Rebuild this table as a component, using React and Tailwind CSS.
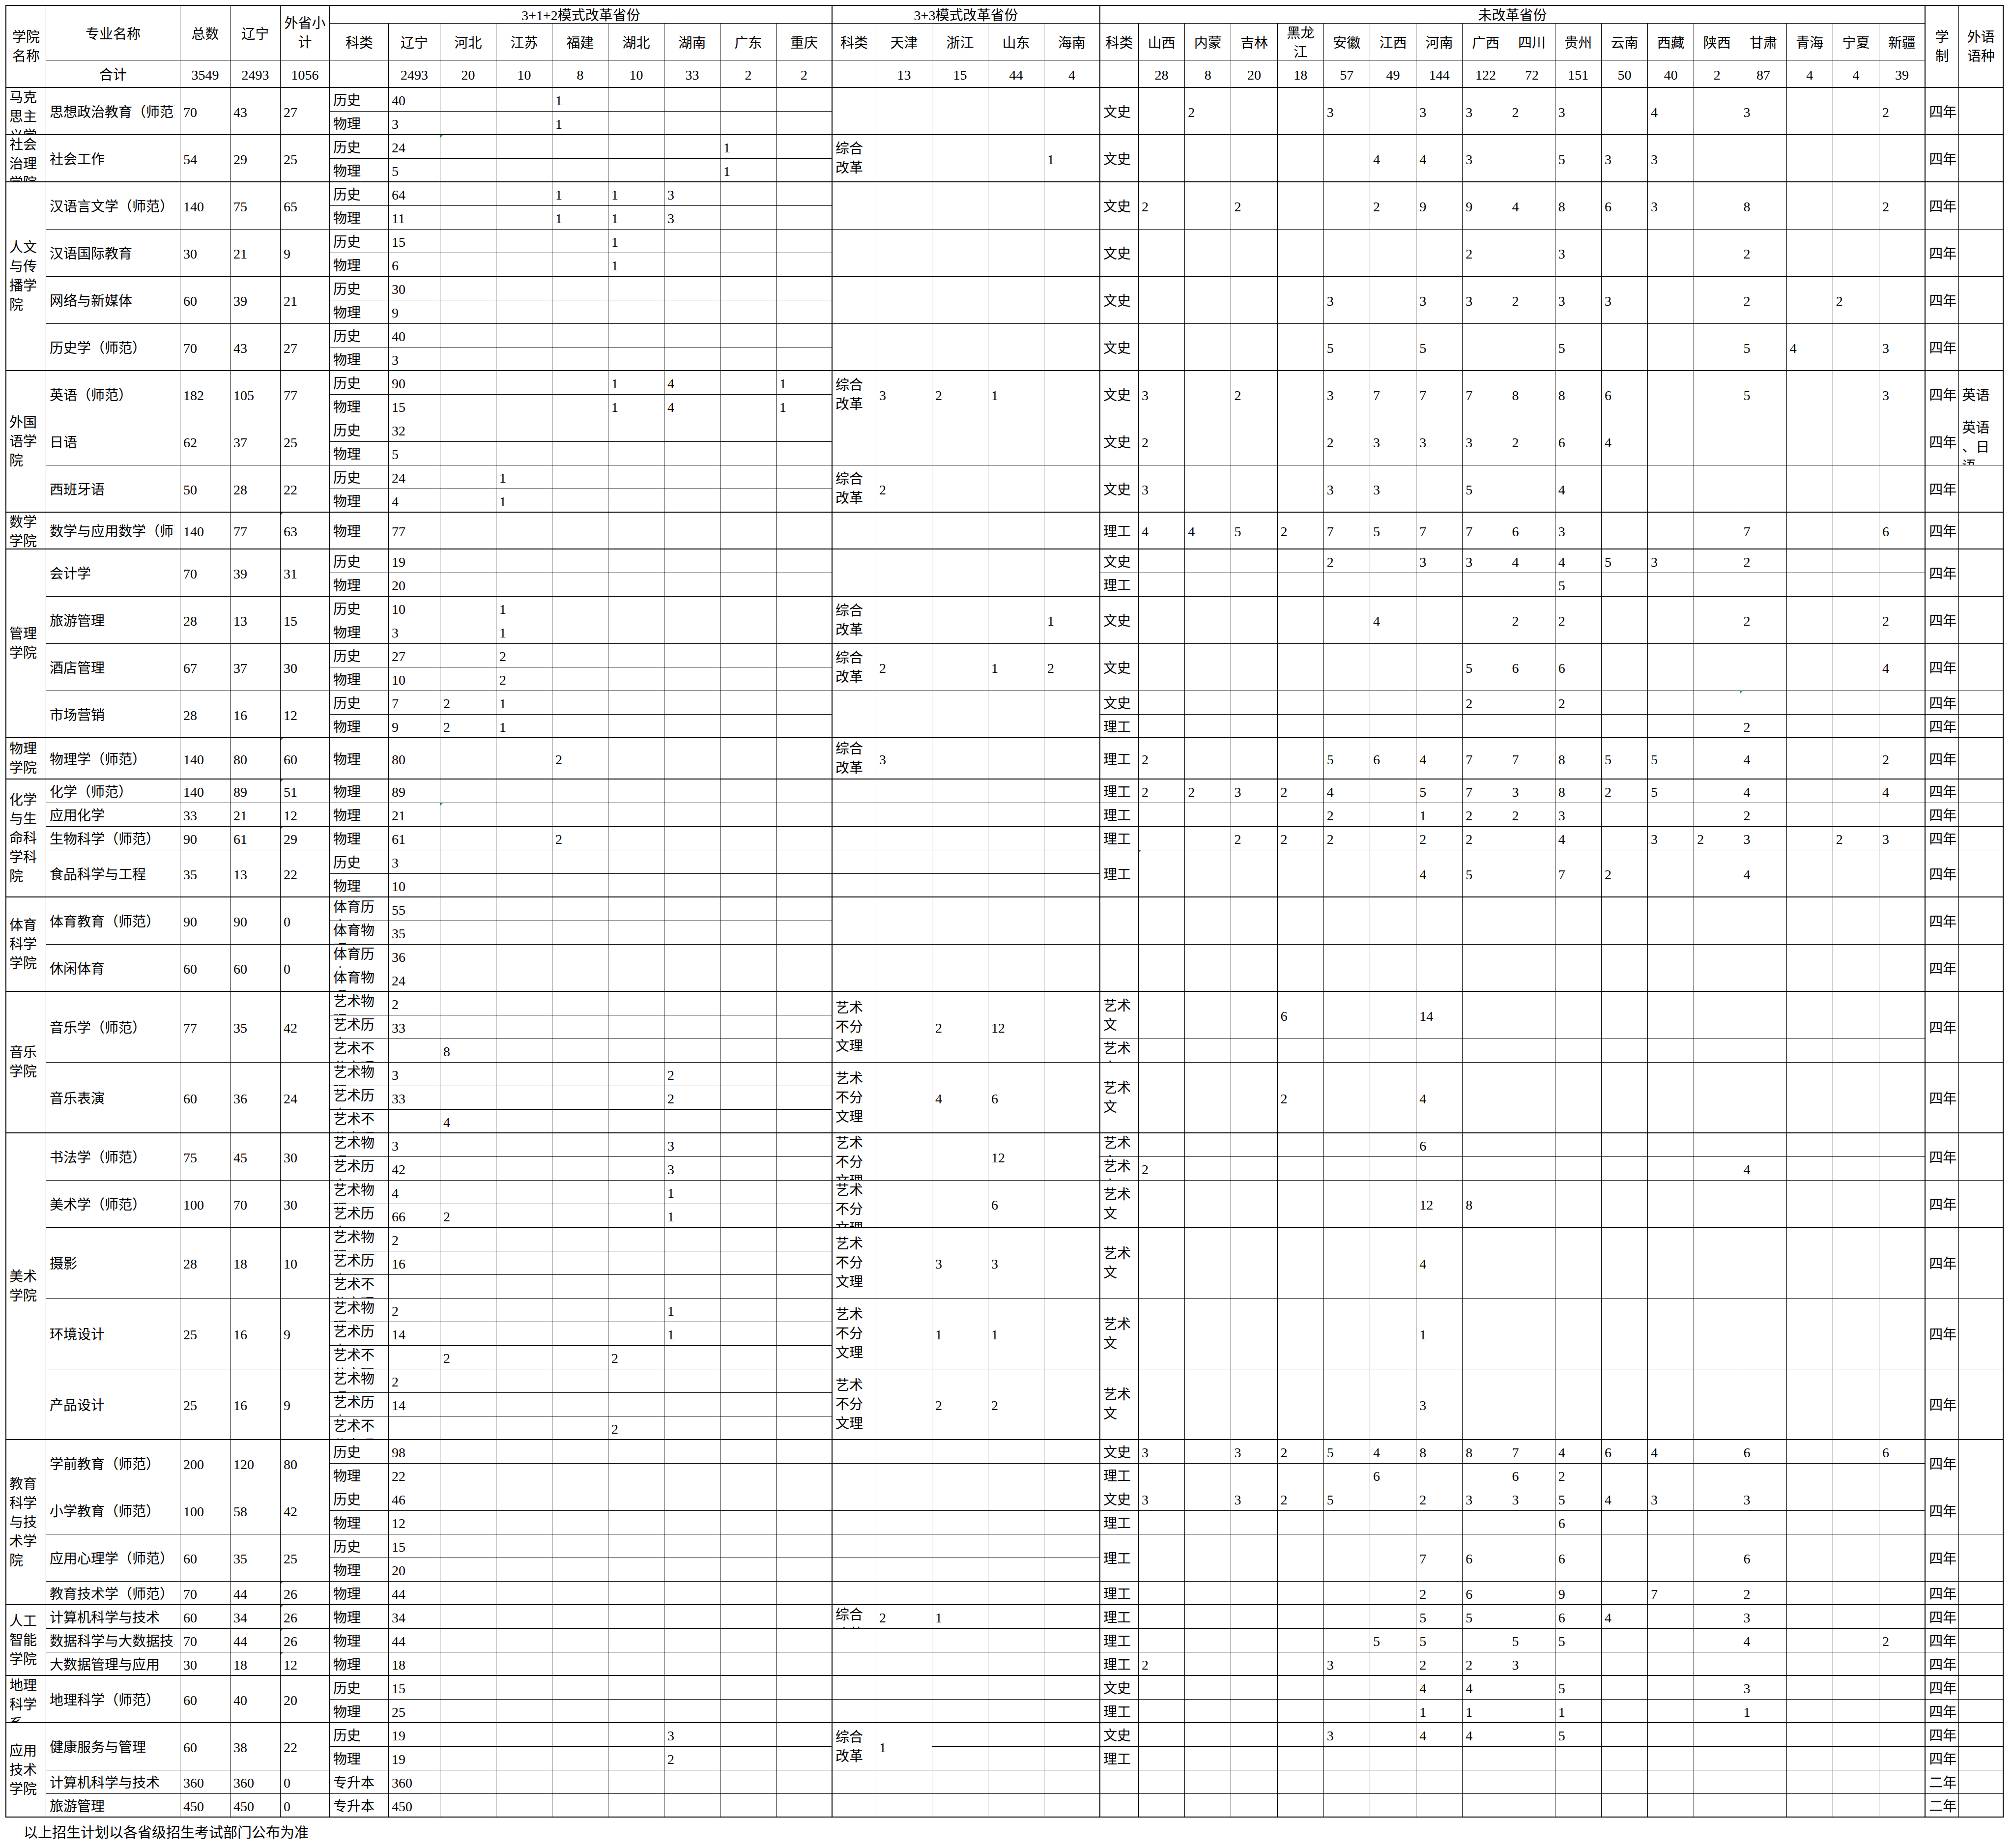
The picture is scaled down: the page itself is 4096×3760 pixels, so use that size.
import React from 'react';

const A_PROV = ['辽宁', '河北', '江苏', '福建', '湖北', '湖南', '广东', '重庆'];
const B_PROV = ['天津', '浙江', '山东', '海南'];
const C_PROV = ['山西', '内蒙', '吉林', '黑龙江', '安徽', '江西', '河南', '广西', '四川', '贵州', '云南', '西藏', '陕西', '甘肃', '青海', '宁夏', '新疆'];

const ZH = '综合\n改革';
const YS = '艺术\n不分\n文理';
const YW = '艺术\n文';
const TH = '体育历\n史';
const TP = '体育物\n理';
const AP = '艺术物\n理';
const AH = '艺术历\n史';
const AN = '艺术不\n分文理';

const COLLEGES = [
  { name: '马克\n思主\n义学\n院', majors: [
    { n: '思想政治教育（师范）', t: 70, l: 43, o: 27,
      a: [['历史', 40, { 福建: 1 }], ['物理', 3, { 福建: 1 }]],
      c: { k: '文史', v: { 内蒙: 2, 安徽: 3, 河南: 3, 广西: 3, 四川: 2, 贵州: 3, 西藏: 4, 甘肃: 3, 新疆: 2 } } },
  ] },
  { name: '社会\n治理\n学院', majors: [
    { n: '社会工作', t: 54, l: 29, o: 25,
      a: [['历史', 24, { 广东: 1 }], ['物理', 5, { 广东: 1 }]],
      b: { k: ZH, v: { 海南: 1 } },
      c: { k: '文史', v: { 江西: 4, 河南: 4, 广西: 3, 贵州: 5, 云南: 3, 西藏: 3 } } },
  ] },
  { name: '人文\n与传\n播学\n院', majors: [
    { n: '汉语言文学（师范）', t: 140, l: 75, o: 65,
      a: [['历史', 64, { 福建: 1, 湖北: 1, 湖南: 3 }], ['物理', 11, { 福建: 1, 湖北: 1, 湖南: 3 }]],
      c: { k: '文史', v: { 山西: 2, 吉林: 2, 江西: 2, 河南: 9, 广西: 9, 四川: 4, 贵州: 8, 云南: 6, 西藏: 3, 甘肃: 8, 新疆: 2 } } },
    { n: '汉语国际教育', t: 30, l: 21, o: 9,
      a: [['历史', 15, { 湖北: 1 }], ['物理', 6, { 湖北: 1 }]],
      c: { k: '文史', v: { 广西: 2, 贵州: 3, 甘肃: 2 } } },
    { n: '网络与新媒体', t: 60, l: 39, o: 21,
      a: [['历史', 30], ['物理', 9]],
      c: { k: '文史', v: { 安徽: 3, 河南: 3, 广西: 3, 四川: 2, 贵州: 3, 云南: 3, 甘肃: 2, 宁夏: 2 } } },
    { n: '历史学（师范）', t: 70, l: 43, o: 27,
      a: [['历史', 40], ['物理', 3]],
      c: { k: '文史', v: { 安徽: 5, 河南: 5, 贵州: 5, 甘肃: 5, 青海: 4, 新疆: 3 } } },
  ] },
  { name: '外国\n语学\n院', majors: [
    { n: '英语（师范）', t: 182, l: 105, o: 77,
      a: [['历史', 90, { 湖北: 1, 湖南: 4, 重庆: 1 }], ['物理', 15, { 湖北: 1, 湖南: 4, 重庆: 1 }]],
      b: { k: ZH, v: { 天津: 3, 浙江: 2, 山东: 1 } },
      c: { k: '文史', v: { 山西: 3, 吉林: 2, 安徽: 3, 江西: 7, 河南: 7, 广西: 7, 四川: 8, 贵州: 8, 云南: 6, 甘肃: 5, 新疆: 3 } },
      w: '英语' },
    { n: '日语', t: 62, l: 37, o: 25,
      a: [['历史', 32], ['物理', 5]],
      c: { k: '文史', v: { 山西: 2, 安徽: 2, 江西: 3, 河南: 3, 广西: 3, 四川: 2, 贵州: 6, 云南: 4 } },
      w: '英语\n、日\n语' },
    { n: '西班牙语', t: 50, l: 28, o: 22,
      a: [['历史', 24, { 江苏: 1 }], ['物理', 4, { 江苏: 1 }]],
      b: { k: ZH, v: { 天津: 2 } },
      c: { k: '文史', v: { 山西: 3, 安徽: 3, 江西: 3, 广西: 5, 贵州: 4 } } },
  ] },
  { name: '数学\n学院', majors: [
    { n: '数学与应用数学（师范）', t: 140, l: 77, o: 63,
      a: [['物理', 77]],
      c: { k: '理工', v: { 山西: 4, 内蒙: 4, 吉林: 5, 黑龙江: 2, 安徽: 7, 江西: 5, 河南: 7, 广西: 7, 四川: 6, 贵州: 3, 甘肃: 7, 新疆: 6 } } },
  ] },
  { name: '管理\n学院', majors: [
    { n: '会计学', t: 70, l: 39, o: 31,
      a: [['历史', 19], ['物理', 20]],
      c: [{ k: '文史', v: { 安徽: 2, 河南: 3, 广西: 3, 四川: 4, 贵州: 4, 云南: 5, 西藏: 3, 甘肃: 2 } }, { k: '理工', v: { 贵州: 5 } }] },
    { n: '旅游管理', t: 28, l: 13, o: 15,
      a: [['历史', 10, { 江苏: 1 }], ['物理', 3, { 江苏: 1 }]],
      b: { k: ZH, v: { 海南: 1 } },
      c: { k: '文史', v: { 江西: 4, 四川: 2, 贵州: 2, 甘肃: 2, 新疆: 2 } } },
    { n: '酒店管理', t: 67, l: 37, o: 30,
      a: [['历史', 27, { 江苏: 2 }], ['物理', 10, { 江苏: 2 }]],
      b: { k: ZH, v: { 天津: 2, 山东: 1, 海南: 2 } },
      c: { k: '文史', v: { 广西: 5, 四川: 6, 贵州: 6, 新疆: 4 } } },
    { n: '市场营销', t: 28, l: 16, o: 12,
      a: [['历史', 7, { 河北: 2, 江苏: 1 }], ['物理', 9, { 河北: 2, 江苏: 1 }]],
      c: [{ k: '文史', v: { 广西: 2, 贵州: 2 } }, { k: '理工', v: { 甘肃: 2 } }],
      x: [{}, {}] },
  ] },
  { name: '物理\n学院', majors: [
    { n: '物理学（师范）', t: 140, l: 80, o: 60,
      a: [['物理', 80, { 福建: 2 }]],
      b: { k: ZH, v: { 天津: 3 } },
      c: { k: '理工', v: { 山西: 2, 安徽: 5, 江西: 6, 河南: 4, 广西: 7, 四川: 7, 贵州: 8, 云南: 5, 西藏: 5, 甘肃: 4, 新疆: 2 } } },
  ] },
  { name: '化学\n与生\n命科\n学科\n院', majors: [
    { n: '化学（师范）', t: 140, l: 89, o: 51,
      a: [['物理', 89]],
      c: { k: '理工', v: { 山西: 2, 内蒙: 2, 吉林: 3, 黑龙江: 2, 安徽: 4, 河南: 5, 广西: 7, 四川: 3, 贵州: 8, 云南: 2, 西藏: 5, 甘肃: 4, 新疆: 4 } } },
    { n: '应用化学', t: 33, l: 21, o: 12,
      a: [['物理', 21]],
      c: { k: '理工', v: { 安徽: 2, 河南: 1, 广西: 2, 四川: 2, 贵州: 3, 甘肃: 2 } } },
    { n: '生物科学（师范）', t: 90, l: 61, o: 29,
      a: [['物理', 61, { 福建: 2 }]],
      c: { k: '理工', v: { 吉林: 2, 黑龙江: 2, 安徽: 2, 河南: 2, 广西: 2, 贵州: 4, 西藏: 3, 陕西: 2, 甘肃: 3, 宁夏: 2, 新疆: 3 } } },
    { n: '食品科学与工程', t: 35, l: 13, o: 22,
      a: [['历史', 3], ['物理', 10]],
      b: [{}, {}],
      c: { k: '理工', v: { 河南: 4, 广西: 5, 贵州: 7, 云南: 2, 甘肃: 4 } } },
  ] },
  { name: '体育\n科学\n学院', majors: [
    { n: '体育教育（师范）', t: 90, l: 90, o: 0, a: [[TH, 55], [TP, 35]] },
    { n: '休闲体育', t: 60, l: 60, o: 0, a: [[TH, 36], [TP, 24]] },
  ] },
  { name: '音乐\n学院', majors: [
    { n: '音乐学（师范）', t: 77, l: 35, o: 42,
      a: [[AP, 2], [AH, 33], [AN, '', { 河北: 8 }]],
      b: { k: YS, v: { 浙江: 2, 山东: 12 } },
      c: [{ k: YW, n: 2, v: { 黑龙江: 6, 河南: 14 } }, { k: YW }] },
    { n: '音乐表演', t: 60, l: 36, o: 24,
      a: [[AP, 3, { 湖南: 2 }], [AH, 33, { 湖南: 2 }], [AN, '', { 河北: 4 }]],
      b: { k: YS, v: { 浙江: 4, 山东: 6 } },
      c: { k: YW, v: { 黑龙江: 2, 河南: 4 } } },
  ] },
  { name: '美术\n学院', majors: [
    { n: '书法学（师范）', t: 75, l: 45, o: 30,
      a: [[AP, 3, { 湖南: 3 }], [AH, 42, { 湖南: 3 }]],
      b: { k: YS, v: { 山东: 12 } },
      c: [{ k: YW, v: { 河南: 6 } }, { k: YW, v: { 山西: 2, 甘肃: 4 } }] },
    { n: '美术学（师范）', t: 100, l: 70, o: 30,
      a: [[AP, 4, { 湖南: 1 }], [AH, 66, { 河北: 2, 湖南: 1 }]],
      b: { k: YS, v: { 山东: 6 } },
      c: { k: YW, v: { 河南: 12, 广西: 8 } } },
    { n: '摄影', t: 28, l: 18, o: 10,
      a: [[AP, 2], [AH, 16], [AN, '']],
      b: { k: YS, v: { 浙江: 3, 山东: 3 } },
      c: { k: YW, v: { 河南: 4 } } },
    { n: '环境设计', t: 25, l: 16, o: 9,
      a: [[AP, 2, { 湖南: 1 }], [AH, 14, { 湖南: 1 }], [AN, '', { 河北: 2, 湖北: 2 }]],
      b: { k: YS, v: { 浙江: 1, 山东: 1 } },
      c: { k: YW, v: { 河南: 1 } } },
    { n: '产品设计', t: 25, l: 16, o: 9,
      a: [[AP, 2], [AH, 14], [AN, '', { 湖北: 2 }]],
      b: { k: YS, v: { 浙江: 2, 山东: 2 } },
      c: { k: YW, v: { 河南: 3 } } },
  ] },
  { name: '教育\n科学\n与技\n术学\n院', majors: [
    { n: '学前教育（师范）', t: 200, l: 120, o: 80,
      a: [['历史', 98], ['物理', 22]],
      b: [{}, {}],
      c: [{ k: '文史', v: { 山西: 3, 吉林: 3, 黑龙江: 2, 安徽: 5, 江西: 4, 河南: 8, 广西: 8, 四川: 7, 贵州: 4, 云南: 6, 西藏: 4, 甘肃: 6, 新疆: 6 } },
        { k: '理工', v: { 江西: 6, 四川: 6, 贵州: 2 } }] },
    { n: '小学教育（师范）', t: 100, l: 58, o: 42,
      a: [['历史', 46], ['物理', 12]],
      b: [{}, {}],
      c: [{ k: '文史', v: { 山西: 3, 吉林: 3, 黑龙江: 2, 安徽: 5, 河南: 2, 广西: 3, 四川: 3, 贵州: 5, 云南: 4, 西藏: 3, 甘肃: 3 } },
        { k: '理工', v: { 贵州: 6 } }] },
    { n: '应用心理学（师范）', t: 60, l: 35, o: 25,
      a: [['历史', 15], ['物理', 20]],
      b: [{}, {}],
      c: { k: '理工', v: { 河南: 7, 广西: 6, 贵州: 6, 甘肃: 6 } } },
    { n: '教育技术学（师范）', t: 70, l: 44, o: 26,
      a: [['物理', 44]],
      c: { k: '理工', v: { 河南: 2, 广西: 6, 贵州: 9, 西藏: 7, 甘肃: 2 } } },
  ] },
  { name: '人工\n智能\n学院', majors: [
    { n: '计算机科学与技术', t: 60, l: 34, o: 26,
      a: [['物理', 34]],
      b: { k: ZH, v: { 天津: 2, 浙江: 1 } },
      c: { k: '理工', v: { 河南: 5, 广西: 5, 贵州: 6, 云南: 4, 甘肃: 3 } } },
    { n: '数据科学与大数据技术', t: 70, l: 44, o: 26,
      a: [['物理', 44]],
      c: { k: '理工', v: { 江西: 5, 河南: 5, 四川: 5, 贵州: 5, 甘肃: 4, 新疆: 2 } } },
    { n: '大数据管理与应用', t: 30, l: 18, o: 12,
      a: [['物理', 18]],
      c: { k: '理工', v: { 山西: 2, 安徽: 3, 河南: 2, 广西: 2, 四川: 3 } } },
  ] },
  { name: '地理\n科学\n系', majors: [
    { n: '地理科学（师范）', t: 60, l: 40, o: 20,
      a: [['历史', 15], ['物理', 25]],
      b: [{}, {}],
      c: [{ k: '文史', v: { 河南: 4, 广西: 4, 贵州: 5, 甘肃: 3 } }, { k: '理工', v: { 河南: 1, 广西: 1, 贵州: 1, 甘肃: 1 } }],
      x: [{}, {}] },
  ] },
  { name: '应用\n技术\n学院', majors: [
    { n: '健康服务与管理', t: 60, l: 38, o: 22,
      a: [['历史', 19, { 湖南: 3 }], ['物理', 19, { 湖南: 2 }]],
      b: { k: ZH, v: { 天津: 1 }, split: ['浙江', '山东', '海南'] },
      c: [{ k: '文史', v: { 安徽: 3, 河南: 4, 广西: 4, 贵州: 5 } }, { k: '理工' }],
      x: [{}, {}] },
    { n: '计算机科学与技术', t: 360, l: 360, o: 0, a: [['专升本', 360]], x: { t: '二年' } },
    { n: '旅游管理', t: 450, l: 450, o: 0, a: [['专升本', 450]], x: { t: '二年' } },
  ] },
];

const TRI = new Set(['3-8', '19-5', '26-34', '28-5', '29-5', '30-8', '31-5', '32-21', '63-5', '64-5', '65-5', '66-5']);
const THICK_R = new Set([5, 14, 19, 37, 39]);

const str = (v) => (v === undefined || v === null ? '' : String(v));

function segs(spec, k) {
  if (!spec) return [{ off: 0, n: k }];
  if (Array.isArray(spec)) {
    let off = 0;
    return spec.map((s) => {
      const n = s.n || 1;
      const o = { ...s, off, n };
      off += n;
      return o;
    });
  }
  return [{ ...spec, off: 0, n: k }];
}

function buildCells() {
  const cells = [];
  const ends = new Set();
  let r = 1;
  COLLEGES.forEach((cg) => {
    const n = cg.majors.reduce((s, m) => s + m.a.length, 0);
    ends.add(r + n - 1);
    r += n;
  });

  const h = (gr, span, col, cs, text) => cells.push({ gr, span, col, cs, text, hdr: true });
  h(1, 3, 1, 1, '学院\n名称');
  h(1, 2, 2, 1, '专业名称');
  h(3, 1, 2, 1, '合计');
  h(1, 2, 3, 1, '总数');
  h(3, 1, 3, 1, '3549');
  h(1, 2, 4, 1, '辽宁');
  h(3, 1, 4, 1, '2493');
  h(1, 2, 5, 1, '外省小\n计');
  h(3, 1, 5, 1, '1056');
  h(1, 1, 6, 9, '3+1+2模式改革省份');
  h(2, 1, 6, 1, '科类');
  A_PROV.forEach((p, i) => h(2, 1, 7 + i, 1, p));
  h(3, 1, 6, 1, '');
  ['2493', '20', '10', '8', '10', '33', '2', '2'].forEach((v, i) => h(3, 1, 7 + i, 1, v));
  h(1, 1, 15, 5, '3+3模式改革省份');
  h(2, 1, 15, 1, '科类');
  B_PROV.forEach((p, i) => h(2, 1, 16 + i, 1, p));
  h(3, 1, 15, 1, '');
  ['13', '15', '44', '4'].forEach((v, i) => h(3, 1, 16 + i, 1, v));
  h(1, 1, 20, 18, '未改革省份');
  h(2, 1, 20, 1, '科类');
  C_PROV.forEach((p, i) => h(2, 1, 21 + i, 1, p === '黑龙江' ? '黑龙\n江' : p));
  h(3, 1, 20, 1, '');
  ['28', '8', '20', '18', '57', '49', '144', '122', '72', '151', '50', '40', '2', '87', '4', '4', '39'].forEach((v, i) =>
    h(3, 1, 21 + i, 1, v)
  );
  h(1, 3, 38, 1, '学\n制');
  h(1, 3, 39, 1, '外语\n语种');

  const add = (row, span, col, text, kind) =>
    cells.push({ gr: row + 3, span, col, cs: 1, text: str(text), kind, tri: TRI.has(`${row}-${col}`), end: ends.has(row + span - 1) });

  r = 1;
  COLLEGES.forEach((cg) => {
    const total = cg.majors.reduce((s, m) => s + m.a.length, 0);
    add(r, total, 1, cg.name, 'college');
    cg.majors.forEach((m) => {
      const k = m.a.length;
      add(r, k, 2, m.n, 'major');
      add(r, k, 3, m.t);
      add(r, k, 4, m.l);
      add(r, k, 5, m.o);
      m.a.forEach((sr, i) => {
        add(r + i, 1, 6, sr[0]);
        add(r + i, 1, 7, sr[1]);
        A_PROV.slice(1).forEach((p, j) => add(r + i, 1, 8 + j, (sr[2] || {})[p]));
      });
      segs(m.b, k).forEach((s) => {
        add(r + s.off, s.n, 15, s.k);
        B_PROV.forEach((p, j) => {
          if (s.split && s.split.includes(p)) {
            for (let q = 0; q < s.n; q++) add(r + s.off + q, 1, 16 + j, '');
          } else {
            add(r + s.off, s.n, 16 + j, (s.v || {})[p]);
          }
        });
      });
      segs(m.c, k).forEach((s) => {
        add(r + s.off, s.n, 20, s.k);
        C_PROV.forEach((p, j) => add(r + s.off, s.n, 21 + j, (s.v || {})[p]));
      });
      segs(m.x, k).forEach((s, i) => {
        add(r + s.off, s.n, 38, s.t || '四年', 'xz');
        add(r + s.off, s.n, 39, i === 0 ? m.w || '' : '');
      });
      r += k;
    });
  });
  return cells;
}

const CELLS = buildCells();

function Cell({ c }) {
  const lastCol = c.col + c.cs - 1;
  const lastRow = c.gr + c.span - 1;
  const thickR = THICK_R.has(lastCol);
  const thickB = c.hdr ? lastRow === 3 : c.end;
  const multi = c.text.includes('\n');
  const topBand = c.hdr && c.gr === 1 && c.span === 1;
  let pad;
  if (c.hdr) pad = 'px-[4px] text-center';
  else if (c.kind === 'major' || c.kind === 'xz') pad = 'pl-[7px] pr-0';
  else pad = 'px-[6px]';
  let pt = '';
  if (topBand) pt = 'pt-[4px]';
  else if (!multi && c.text) pt = 'pt-[4px]';
  const cls = [
    'relative flex flex-col overflow-hidden border-black [justify-content:safe_center]',
    topBand ? 'leading-[30px]' : 'leading-[39px]',
    multi ? 'whitespace-pre-line' : 'whitespace-nowrap',
    thickR ? 'border-r-2' : 'border-r',
    thickB ? 'border-b-2' : 'border-b',
    pad,
    pt,
  ].join(' ');
  return (
    <div className={cls} style={{ gridRow: `${c.gr} / span ${c.span}`, gridColumn: `${c.col} / span ${c.cs}` }}>
      {c.tri && (
        <span className="absolute left-0 top-0 border-t-[5px] border-r-[5px] border-t-[#2a9d2a] border-r-transparent" />
      )}
      {c.kind === 'major' ? <div className="w-[254px] overflow-hidden whitespace-nowrap">{c.text}</div> : c.text}
    </div>
  );
}

export default function App() {
  return (
    <div className="min-h-screen bg-white text-black text-[28px] [font-family:'Liberation_Serif','Noto_Sans_CJK_SC',serif] pt-[10px] pl-[11px]">
      <div className="grid w-max border-t-2 border-l-2 border-black grid-cols-[81px_273px_102px_102px_101px_119px_105px_repeat(7,114px)_89px_repeat(4,114px)_78px_repeat(17,94.2px)_68px_91px] grid-rows-[36px_75px_56px_repeat(18,48px)_75px_repeat(8,48px)_84px_repeat(44,48px)]">
        {CELLS.map((c, i) => (
          <Cell key={i} c={c} />
        ))}
      </div>
      <div className="pl-[37px] pt-[11px] text-[29px] leading-[40px]">以上招生计划以各省级招生考试部门公布为准</div>
    </div>
  );
}
